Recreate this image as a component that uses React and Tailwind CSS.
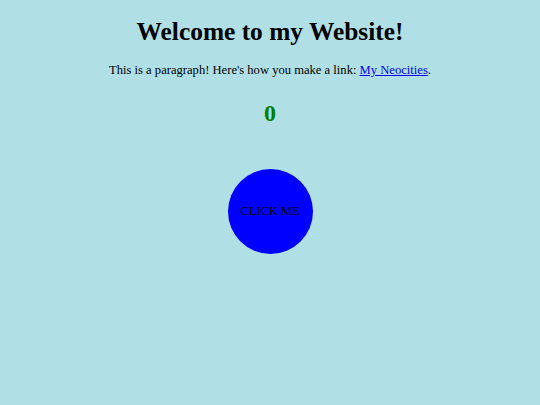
import { useState } from "react";

const App = () => {
    const [count, setCount] = useState(0);

    return (
        <div className="min-h-[405px] bg-[#b0e0e6] pt-[17px] text-center font-['Liberation_Serif',serif] text-black">
            <h1 className="text-[25.4px] font-bold leading-[29px]">Welcome to my Website!</h1>
            <p className="mt-[17px] text-[12.6px] leading-[15px]">
                This is a paragraph! Here's how you make a link:{" "}
                <a href="#" className="text-[#0000ee] underline">My Neocities</a>.
            </p>
            <h2 className="mt-[21px] text-[24px] font-bold leading-[28px] text-[#008000]">{count}</h2>
            <div className="mt-[42px] flex justify-center">
                <button
                    onClick={() => setCount(count + 1)}
                    className="flex h-[85px] w-[85px] items-center justify-center rounded-full bg-[#0000ff] text-[12.5px] text-black font-['Liberation_Serif',serif]"
                >
                    CLICK ME
                </button>
            </div>
        </div>
    );
};

export default App;
